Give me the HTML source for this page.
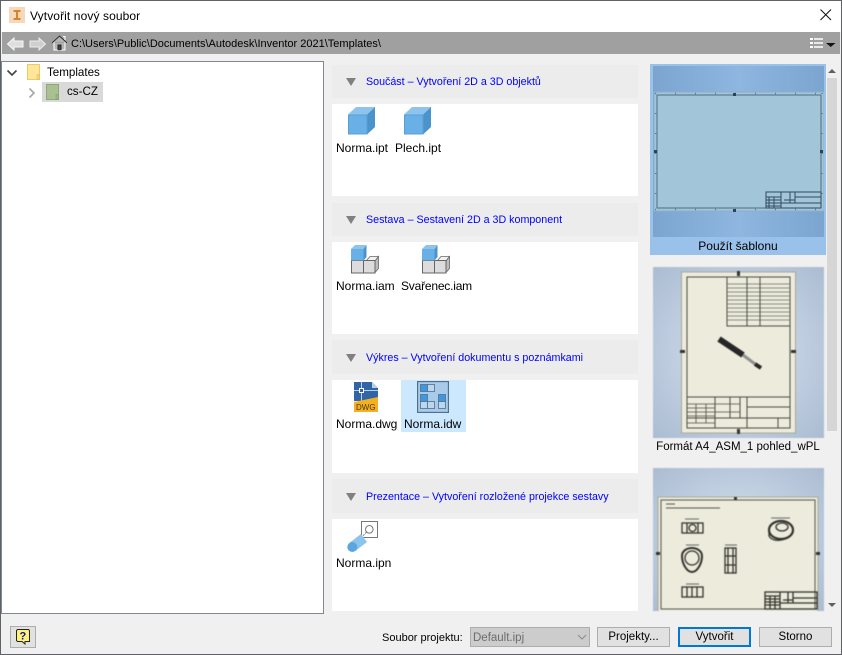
<!DOCTYPE html>
<html><head><meta charset="utf-8">
<style>
html,body{margin:0;padding:0;width:842px;height:655px;overflow:hidden;background:#f0f0f0}
body{font-family:"Liberation Sans",sans-serif;font-size:12px;color:#000;position:relative}
.a{position:absolute}
.t{position:absolute;white-space:nowrap;line-height:14px;height:14px}
.hd{position:absolute;left:332px;width:306px;background:#ececec}
.wh{position:absolute;left:332px;width:306px;background:#fff}
.lnk{position:absolute;left:366px;color:#0000ff;white-space:nowrap;font-size:10.7px;line-height:14px}
.tri{position:absolute;left:346px;width:0;height:0;border-left:5px solid transparent;border-right:5px solid transparent;border-top:8px solid #808080}
.btn{position:absolute;top:627px;height:18px;border:1px solid #adadad;background:#e1e1e1;text-align:center;line-height:18px;font-size:11.5px}
svg{position:absolute;display:block}
</style></head>
<body>
<div class="a" style="left:0;top:0;width:842px;height:32px;background:#fff"></div>
<svg style="left:9px;top:7px" width="16" height="16" viewBox="0 0 16 16"><rect width="16" height="16" fill="#f6d9bd"/><path d="M4.5 3H11.5V5H9V11H11.5V13H4.500V11H7V5H4.500Z" fill="#d9822b"/></svg>
<div class="t" style="left:30px;top:9px;font-size:12px;letter-spacing:.1px">Vytvořit nový soubor</div>
<svg style="left:819px;top:8px" width="14" height="14" viewBox="0 0 14 14"><path d="M1.500 1.500L12 12M12 1.500L1.500 12" stroke="#111" stroke-width="1" fill="none"/></svg>

<div class="a" style="left:2px;top:32px;width:838px;height:22px;background:#a0a0a0"></div>
<svg style="left:6px;top:36px" width="18" height="16" viewBox="0 0 18 16"><path d="M1.500 8L8 2V5H17V11H8V14Z" fill="#dedede" stroke="#f8f8f8"/></svg>
<svg style="left:29px;top:36px" width="18" height="16" viewBox="0 0 18 16"><path d="M16.500 8L10 2V5H1V11H10V14Z" fill="#cfcfcf" stroke="#ececec"/></svg>
<svg style="left:51px;top:34px" width="17" height="17" viewBox="0 0 17 17"><path d="M1 9L8.500 2L16 9M3 8V16H7V11H10V16H14V8M12 2.500H14V6" fill="#b5b5b5" stroke="#fff" stroke-width="1"/><path d="M1 9L8.500 2L16 9" fill="none" stroke="#222" stroke-width="1"/><path d="M7 16V11H10V16" fill="#444" stroke="#222"/></svg>
<div class="t" style="left:71px;top:37px;font-size:11px;color:#000">C:\Users\Public\Documents\Autodesk\Inventor 2021\Templates\</div>
<svg style="left:810px;top:37px" width="27" height="13" viewBox="0 0 27 13"><path d="M0 2H3M0 6H3M0 10H3" stroke="#fff" stroke-width="2"/><path d="M4 2H13M4 6H13M4 10H13" stroke="#fff" stroke-width="1.400"/><path d="M16 6H25.500L20.750 10Z" fill="#111"/></svg>

<div class="a" style="left:1px;top:61px;width:321px;height:551px;background:#fff;border:1px solid #828790"></div>
<svg style="left:6px;top:68px" width="12" height="10" viewBox="0 0 12 10"><path d="M1.500 2.500L6 7L10.500 2.500" fill="none" stroke="#444" stroke-width="1.600"/></svg>
<svg style="left:27px;top:64px" width="14" height="17" viewBox="0 0 14 17"><rect x=".5" y=".5" width="12" height="15" fill="#ffe699" stroke="#e8cb6d"/><rect x="10" y="10.500" width="2.500" height="5" fill="#f2d67c" stroke="#d9bb5a" stroke-width=".5"/></svg>
<div class="t" style="left:47px;top:66px;font-size:11.6px">Templates</div>
<svg style="left:27px;top:87px" width="10" height="12" viewBox="0 0 10 12"><path d="M2.500 1.500L7 6L2.500 10.500" fill="none" stroke="#a6a6a6" stroke-width="1.600"/></svg>
<div class="a" style="left:42px;top:82px;width:61px;height:20px;background:#d9d9d9"></div>
<svg style="left:46px;top:84px" width="14" height="17" viewBox="0 0 14 17"><rect x=".5" y=".5" width="12" height="15" fill="#a9c092" stroke="#8ea878"/><rect x="10" y="10.500" width="2.500" height="5" fill="#9db587" stroke="#7f9a69" stroke-width=".5"/></svg>
<div class="t" style="left:67px;top:85px;font-size:11.6px">cs-CZ</div>

<div class="hd" style="top:65px;height:33px"></div><div class="tri" style="top:78px"></div>
<div class="lnk" style="top:75px">Součást – Vytvoření 2D a 3D objektů</div>
<div class="wh" style="top:104px;height:92px"></div>
<div class="hd" style="top:203px;height:33px"></div><div class="tri" style="top:216px"></div>
<div class="lnk" style="top:213px">Sestava – Sestavení 2D a 3D komponent</div>
<div class="wh" style="top:242px;height:92px"></div>
<div class="hd" style="top:340px;height:34px"></div><div class="tri" style="top:354px"></div>
<div class="lnk" style="top:351px">Výkres – Vytvoření dokumentu s poznámkami</div>
<div class="wh" style="top:380px;height:93px"></div>
<div class="hd" style="top:479px;height:34px"></div><div class="tri" style="top:493px"></div>
<div class="lnk" style="top:490px">Prezentace – Vytvoření rozložené projekce sestavy</div>
<div class="wh" style="top:519px;height:92px"></div>

<svg style="left:348px;top:107px" width="28" height="28" viewBox="0 0 28 28"><path d="M0 7.500L8 0H27L19 7.500Z" fill="#8cc4ee"/><path d="M19 7.500L27 0V20L19 27.500Z" fill="#4a94cb"/><rect x=".5" y="8" width="18.500" height="19" fill="#69b0e6" stroke="#5a9fd4"/></svg>
<svg style="left:404px;top:107px" width="28" height="28" viewBox="0 0 28 28"><path d="M0 7.500L8 0H27L19 7.500Z" fill="#8cc4ee"/><path d="M19 7.500L27 0V20L19 27.500Z" fill="#4a94cb"/><rect x=".5" y="8" width="18.500" height="19" fill="#69b0e6" stroke="#5a9fd4"/></svg>
<div class="t" style="left:336px;top:141px">Norma.ipt</div>
<div class="t" style="left:395px;top:141px">Plech.ipt</div>

<svg style="left:351px;top:245px" width="28" height="29" viewBox="0 0 28 29"><path d="M15 16L19 11.500H27.500L24 16Z" fill="#f2f2f2" stroke="#666" stroke-width=".8"/><path d="M24 16L27.500 11.500V23.500L24 27.500Z" fill="#bdbdbd" stroke="#666" stroke-width=".8"/><rect x=".5" y="15.500" width="12" height="12.500" fill="#dcdcdc" stroke="#666"/><rect x="12.500" y="15.500" width="11.500" height="12.500" fill="#dcdcdc" stroke="#666"/><rect x="0" y="4" width="12.500" height="11.500" fill="#69b0e6"/><path d="M0 4L4 0H15.500L12.500 4Z" fill="#8cc4ee"/><path d="M12.500 4L15.500 0V12L12.500 15.500Z" fill="#4a94cb"/></svg>
<svg style="left:422px;top:245px" width="28" height="29" viewBox="0 0 28 29"><path d="M15 16L19 11.500H27.500L24 16Z" fill="#f2f2f2" stroke="#666" stroke-width=".8"/><path d="M24 16L27.500 11.500V23.500L24 27.500Z" fill="#bdbdbd" stroke="#666" stroke-width=".8"/><rect x=".5" y="15.500" width="12" height="12.500" fill="#dcdcdc" stroke="#666"/><rect x="12.500" y="15.500" width="11.500" height="12.500" fill="#dcdcdc" stroke="#666"/><rect x="0" y="4" width="12.500" height="11.500" fill="#69b0e6"/><path d="M0 4L4 0H15.500L12.500 4Z" fill="#8cc4ee"/><path d="M12.500 4L15.500 0V12L12.500 15.500Z" fill="#4a94cb"/></svg>
<div class="t" style="left:336px;top:279px">Norma.iam</div>
<div class="t" style="left:401px;top:279px;letter-spacing:-.2px">Svařenec.iam</div>

<svg style="left:354px;top:382px" width="24" height="30" viewBox="0 0 24 30"><path d="M0 0H18L24 6V19H0Z" fill="#2f66a3"/><path d="M18 0L24 6H18Z" fill="#b9d1e8"/><path d="M7.500 0V19M0 8.500H24" stroke="#b9d1e8" stroke-width="1"/><rect x="5.500" y="6.500" width="4" height="4" fill="#2f66a3" stroke="#fff"/><path d="M0 20L24 15V30H0Z" fill="#f5b021"/><text x="2" y="28" font-family="Liberation Sans,sans-serif" font-size="8" fill="#4a3a10">DWG</text></svg>
<div class="a" style="left:401px;top:380px;width:65px;height:52px;background:#cce8ff"></div>
<svg style="left:417px;top:381px" width="32" height="32" viewBox="0 0 32 32"><rect x=".5" y=".5" width="31" height="31" fill="#a9cbe9" stroke="#4f6f8c" stroke-width="1.300"/><g stroke="#4f6f8c" stroke-width=".8"><rect x="3.500" y="3.500" width="7" height="7" fill="#3f97e0"/><rect x="10.500" y="3.500" width="7" height="7" fill="#bcd6ec"/><rect x="3.500" y="13.500" width="7" height="7" fill="#3f97e0"/><rect x="3.500" y="20.500" width="7" height="7" fill="#bcd6ec"/><rect x="10.500" y="20.500" width="7" height="7" fill="#bcd6ec"/><rect x="21.500" y="13.500" width="7" height="7" fill="#3f97e0"/><rect x="21.500" y="20.500" width="7" height="7" fill="#bcd6ec"/></g></svg>
<div class="t" style="left:336px;top:417px">Norma.dwg</div>
<div class="t" style="left:404px;top:417px">Norma.idw</div>

<svg style="left:347px;top:521px" width="32" height="32" viewBox="0 0 32 32"><rect x="14.500" y=".5" width="16" height="16" fill="#fff" stroke="#777"/><circle cx="22.300" cy="8.300" r="3.800" fill="none" stroke="#777"/><path d="M19.500 11L13 18" stroke="#777" stroke-dasharray="2 1"/><path d="M5.300 26L17 17" stroke="#8cc4ee" stroke-width="10" fill="none"/><circle cx="5.300" cy="26" r="5" fill="#5ba6df"/></svg>
<div class="t" style="left:336px;top:556px">Norma.ipn</div>

<!-- thumb 1 -->
<div class="a" style="left:650px;top:64px;width:176px;height:191px;background:#99c1ea"></div>
<div class="t" style="left:650px;width:176px;top:239px;text-align:center">Použít šablonu</div>
<svg style="left:653px;top:66px" width="171" height="171" viewBox="0 0 171 171">
<defs><linearGradient id="g1" x1="0" y1="0" x2="1" y2="0"><stop offset="0" stop-color="#7ba5cf"/><stop offset=".5" stop-color="#8eb6df"/><stop offset="1" stop-color="#7ba5cf"/></linearGradient>
<radialGradient id="g2" cx=".5" cy=".5" r=".75"><stop offset="0" stop-color="#d7e3f0"/><stop offset="1" stop-color="#a8b9d0"/></radialGradient></defs>
<rect width="171" height="171" fill="url(#g1)"/>
<rect x="1" y="26" width="170" height="119" fill="#a3c5d9" stroke="#8bb0c8"/>
<rect x="4" y="29" width="164" height="113" fill="none" stroke="#4e6c82" stroke-width="1"/>
<path d="M2 27.500H169M2 143.500H169M2.500 27V145M169 27V145" stroke="#5d7d95" stroke-width="1.500" stroke-dasharray="1 19" fill="none"/>
<g fill="none" stroke="#2f4a62" stroke-width="1"><rect x="113" y="126" width="55" height="16"/><path d="M113 131H128M113 134H128M113 137H128M113 140H128M116 131V142M121 131V142M128 126V142M137 126V137M142 126V137M142 131H168M142 137H168M128 137H168M131 134H142"/></g>
<rect x="80" y="27" width="3" height="3" fill="#2b4258"/><rect x="80" y="143" width="3" height="3" fill="#2b4258"/><rect x="1" y="84" width="3" height="3" fill="#2b4258"/><rect x="167" y="84" width="3" height="3" fill="#2b4258"/>
</svg>
<!-- thumb 2 -->
<svg style="left:653px;top:267px;filter:blur(.45px)" width="171" height="171" viewBox="0 0 171 171">
<rect width="171" height="171" fill="url(#g2)"/>
<rect x="28.500" y="5" width="114" height="161" fill="#ecebdc" stroke="#a8a898"/>
<g fill="none" stroke="#4a4a42" stroke-width="1"><rect x="34" y="10" width="103" height="151"/><rect x="74" y="10" width="63" height="49"/><path d="M74 17H137M74 21H137M74 25H137M74 29H137M74 33H137M74 37H137M74 41H137M74 45H137M74 49H137M74 53H137" stroke-width=".7" stroke="#6a6a60"/><path d="M94 10V59M107 10V59M34 130H137M62 130V161M77 130V151M87 130V151M34 151H137M94 130V161M125 151V161M94 140H137" /><path d="M34 137H62M34 141H62M34 145H62M34 149H62M34 156H62M43 137V156M53 137V156M62 137H87M62 145H87" stroke-width=".8"/></g>
<g fill="none"><path d="M66 72L90 88" stroke="#262626" stroke-width="6"/><path d="M90 88L102 97" stroke="#8f8f8f" stroke-width="3"/><path d="M102 97L108 101" stroke="#262626" stroke-width="4"/></g>
<rect x="84" y="4" width="3" height="5" fill="#333"/><rect x="84" y="162" width="3" height="5" fill="#333"/><rect x="27" y="83" width="5" height="3" fill="#333"/><rect x="138" y="83" width="5" height="3" fill="#333"/>
</svg>
<div class="t" style="left:650px;width:176px;top:440px;text-align:center;font-size:11.500px">Formát A4_ASM_1 pohled_wPL</div>
<!-- thumb 3 -->
<svg style="left:653px;top:468px;filter:blur(.45px)" width="171" height="143" viewBox="0 0 171 143">
<rect width="171" height="143" fill="url(#g2)"/>
<rect x="5" y="29" width="160" height="116" fill="#ecebdc" stroke="#a8a898"/>
<rect x="8" y="32" width="154" height="109" fill="none" stroke="#55554b"/>
<path d="M13 36H22M13 40H67" stroke="#55554b" stroke-width="1"/>
<path d="M32 51H46M33 77H46M72 77H84M33 116H46M118 50H137" stroke="#666" stroke-width="1"/>
<g fill="none" stroke="#33332e" stroke-width="1.300">
<rect x="29" y="55" width="21" height="10"/><circle cx="39.500" cy="60" r="3.500"/><path d="M34 55V65M45 55V65"/>
<path d="M29 88C29 82 35 80 39 80C44 80 49 83 49 88C49 96 44 104 39 104C34 104 29 96 29 88Z" stroke-width="2"/><circle cx="39" cy="90" r="7"/>
<rect x="72" y="80" width="11" height="25"/><path d="M72 88H83M72 97H83M75 80V105M80 80V105"/>
<rect x="29" y="119" width="21" height="10"/><path d="M34 119V129M39 119V129M44 119V129"/>
<ellipse cx="128" cy="62" rx="12" ry="9" stroke-width="2.200"/><ellipse cx="129" cy="59" rx="6" ry="4"/><path d="M116 64V68C118 72 124 73 128 72C134 71 140 68 140 63"/>
<rect x="112" y="124" width="52" height="17"/><path d="M112 128H127M112 131H127M112 134H127M112 137H127M117 128V141M122 128V141M127 124V141M135 124V135M140 124V135M140 130H164M140 135H164M127 135H164M130 132H140"/>
</g>
<rect x="81" y="29" width="3" height="3" fill="#333"/><rect x="3" y="84" width="4" height="3" fill="#333"/><rect x="163" y="84" width="4" height="3" fill="#333"/>
</svg>
<!-- scrollbar -->
<div class="a" style="left:827px;top:78px;width:10px;height:353px;background:#d6d6d6"></div>
<div class="a" style="left:828px;top:69px;width:0;height:0;border-left:4px solid transparent;border-right:4px solid transparent;border-bottom:4px solid #606060"></div>
<div class="a" style="left:828px;top:603px;width:0;height:0;border-left:4px solid transparent;border-right:4px solid transparent;border-top:4px solid #606060"></div>
<!-- footer -->
<div class="a" style="left:10px;top:626px;width:24px;height:20px;border:1px solid #adadad;background:#e1e1e1"></div>
<svg style="left:16px;top:629px" width="15" height="16" viewBox="0 0 15 16"><path d="M1.500 .5H12.500L13.500 1.500V12.500H9V15L6 12.500H1.500L.5 11.500V1.500Z" fill="#fff27a" stroke="#222"/><text x="3.500" y="10.500" font-family="Liberation Sans,sans-serif" font-size="11" font-weight="bold" fill="#11119a">?</text></svg>
<div class="t" style="left:382px;top:631px;font-size:11px">Soubor projektu:</div>
<div class="a" style="left:470px;top:627px;width:118px;height:18px;border:1px solid #adadad;background:#cccccc"></div>
<div class="t" style="left:473px;top:631px;color:#6d6d6d;font-size:11.500px">Default.ipj</div>
<svg style="left:577px;top:634px" width="10" height="7" viewBox="0 0 10 7"><path d="M1 1L5 5L9 1" fill="none" stroke="#8a8a8a"/></svg>
<div class="btn" style="left:597px;width:71px">Projekty...</div>
<div class="btn" style="left:678px;top:627px;width:69px;height:16px;border:2px solid #0078d7;line-height:16px">Vytvořit</div>
<div class="btn" style="left:759px;width:71px">Storno</div>
<!-- window border -->
<div class="a" style="left:0;top:0;width:840px;height:653px;border:1px solid #5f6368;pointer-events:none"></div>
</body></html>
